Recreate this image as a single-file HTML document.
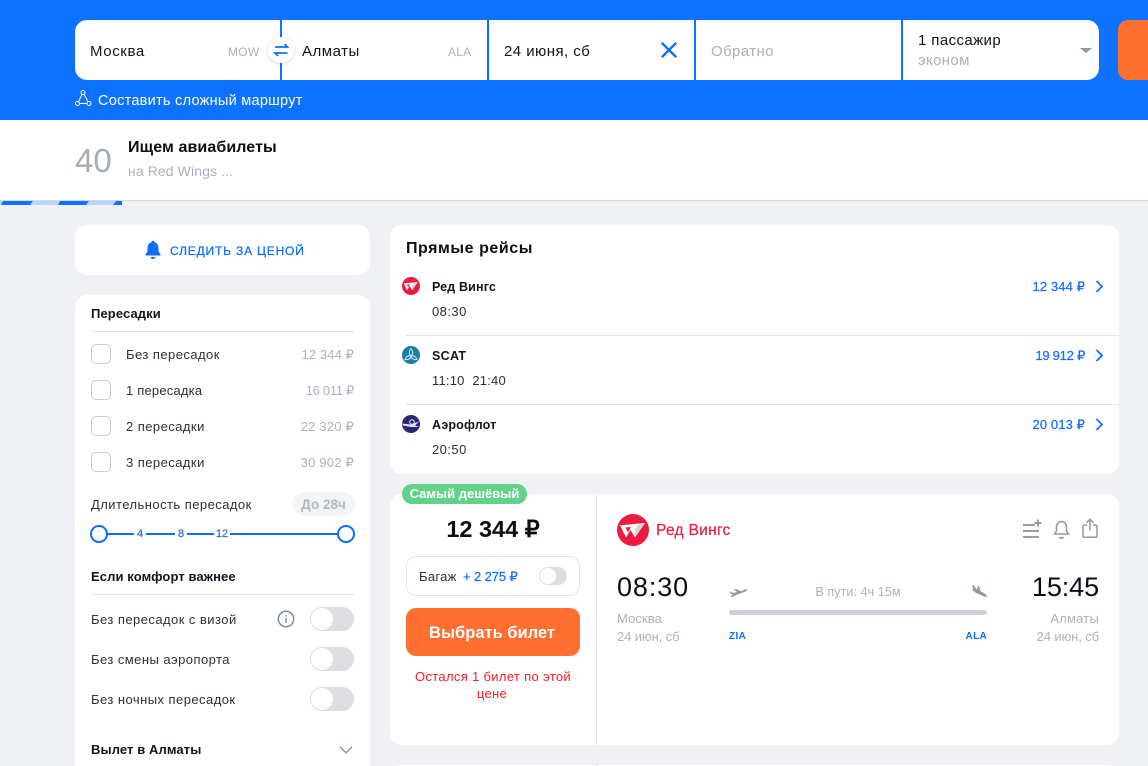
<!DOCTYPE html>
<html lang="ru"><head><meta charset="utf-8"><title>Авиабилеты</title>
<style>
html,body{margin:0;padding:0;width:1148px;height:766px;overflow:hidden}
body{font-family:"Liberation Sans",sans-serif;color:#10151c}
#w{position:relative;width:1148px;height:766px;overflow:hidden;background:#eff1f5}
.a{position:absolute}
.t{position:absolute;white-space:nowrap;line-height:18px;height:18px;margin-top:1px}
.r{text-align:right}
.c{text-align:center}
.card{position:absolute;background:#fff;border-radius:12px}
.cb{position:absolute;left:91px;width:18px;height:18px;border:1.5px solid #c9ccd0;border-radius:5px;background:#fff}
.tg{position:absolute;left:310px;width:44px;height:24px;border-radius:12px;background:#dcdee3}
.tg i{position:absolute;left:1px;top:1px;width:22px;height:22px;border-radius:50%;background:#fff}
.sm{font-size:13px;letter-spacing:.45px;color:#2b3038}
.gr{color:#a8b3bf}
.bl{color:#0d6efd}
.n{font-size:11px;color:#2f5df0;-webkit-text-stroke:.2px #2f5df0}
svg{position:absolute;overflow:visible}
</style></head><body><div id="w">

<div class="a" style="left:0;top:0;width:1148px;height:120px;background:#0d72ff"></div>
<div class="a" style="left:75px;top:20px;width:1024px;height:60px;background:#fff;border-radius:12px"></div>
<div class="a" style="left:280px;top:20px;width:2px;height:60px;background:#0d72ff"></div>
<div class="a" style="left:487px;top:20px;width:2px;height:60px;background:#0d72ff"></div>
<div class="a" style="left:694px;top:20px;width:2px;height:60px;background:#0d72ff"></div>
<div class="a" style="left:901px;top:20px;width:2px;height:60px;background:#0d72ff"></div>
<div class="a" style="left:1118px;top:20px;width:40px;height:60px;background:#ff6f2f;border-radius:10px 0 0 10px"></div>

<div class="t" style="left:90px;top:42px;font-size:15px;letter-spacing:.6px">Москва</div>
<div class="t gr" style="left:228px;top:42px;font-size:12px;letter-spacing:.3px">MOW</div>
<div class="a" style="left:268px;top:37px;width:26px;height:26px;border-radius:50%;background:#fff;box-shadow:0 1px 4px rgba(0,0,0,.16)"></div>
<svg style="left:268px;top:37px" width="26" height="26" viewBox="0 0 26 26" fill="none" stroke="#0d72ff" stroke-width="1.700"><path d="M7 10H19.500L16.500 7M19.500 16H7L10 19"/></svg>
<div class="t" style="left:302px;top:42px;font-size:15px;letter-spacing:.5px">Алматы</div>
<div class="t gr" style="left:448px;top:42px;font-size:12px;letter-spacing:.2px">ALA</div>
<div class="t" style="left:504px;top:42px;font-size:15px;letter-spacing:.45px">24 июня, сб</div>
<svg style="left:660px;top:41px" width="18" height="18" viewBox="0 0 18 18" fill="none" stroke="#0d6efd" stroke-width="2.400"><path d="M1.800 1.800 16.200 16.200M16.200 1.800 1.800 16.200"/></svg>
<div class="t" style="left:711px;top:42px;font-size:15px;letter-spacing:.4px;color:#a8b3bf">Обратно</div>
<div class="t" style="left:918px;top:31px;font-size:15px;letter-spacing:.4px">1 пассажир</div>
<div class="t gr" style="left:918px;top:51px;font-size:15px;letter-spacing:.35px">эконом</div>
<svg style="left:1080px;top:47px" width="12" height="8" viewBox="0 0 12 8"><path d="M0 1H12L6 6Z" fill="#8b99a8"/></svg>

<svg style="left:75px;top:90px" width="18" height="17" viewBox="0 0 18 17" fill="none" stroke="#fff" stroke-width="1"><circle cx="8" cy="2.500" r="2"/><circle cx="2.500" cy="13.500" r="2"/><circle cx="14" cy="13.500" r="2"/><path d="M7 4.300 3.500 11.700M9 4.300 13 11.700M4.500 13.500H12"/></svg>
<div class="t" style="left:98px;top:91px;font-size:14.500px;letter-spacing:.27px;color:#fff">Составить сложный маршрут</div>

<div class="a" style="left:0;top:120px;width:1148px;height:80px;background:#fff;border-bottom:1px solid #d4d8e0"></div>
<div class="t" style="left:75px;top:140px;font-size:33px;line-height:40px;height:40px;color:#a3aeb9">40</div>
<div class="t" style="left:128px;top:138px;font-size:16px;font-weight:bold;letter-spacing:.1px;color:#0b0f14">Ищем авиабилеты</div>
<div class="t gr" style="left:128px;top:161px;font-size:14px;letter-spacing:.1px">на Red Wings ...</div>
<svg style="left:0;top:201px" width="124" height="4" viewBox="0 0 124 4"><rect x="0" y="0" width="122" height="4" fill="#b9d6ff"/><path d="M3 0H33L30 4H1ZM60 0H89L86 4H58ZM116 0H122V4H113Z" fill="#0d72ff"/></svg>

<div class="card" style="left:75px;top:225px;width:295px;height:50px"></div>
<svg style="left:144px;top:240px" width="18" height="20" viewBox="0 0 18 20"><path d="M9 .800c.900 0 1.500.600 1.600 1.400C13.200 3 14.500 5.200 14.500 8v3.500l2 2.800v1.200H1.500v-1.200l2-2.800V8c0-2.800 1.300-5 3.900-5.800C7.500 1.400 8.100.800 9 .800ZM6.500 17h5c-.300 1.200-1.300 2-2.500 2s-2.200-.800-2.500-2Z" fill="#0d6efd"/></svg>
<div class="t" style="left:170px;top:241px;font-size:12px;letter-spacing:.82px;color:#0d6efd;-webkit-text-stroke:.25px #0d6efd">СЛЕДИТЬ ЗА ЦЕНОЙ</div>

<div class="card" style="left:75px;top:295px;width:295px;height:490px"></div>
<div class="t" style="left:91px;top:304px;font-size:13px;font-weight:bold;letter-spacing:.1px">Пересадки</div>
<div class="a" style="left:91px;top:331px;width:263px;height:1px;background:#e2e5ea"></div>
<div class="cb" style="top:344px"></div><div class="t sm" style="left:126px;top:345px">Без пересадок</div><div class="t r gr" style="right:794px;top:345px;font-size:13px;letter-spacing:.1px">12 344 ₽</div>
<div class="cb" style="top:380px"></div><div class="t sm" style="left:126px;top:381px;letter-spacing:.2px">1 пересадка</div><div class="t r gr" style="right:794px;top:381px;font-size:13px;letter-spacing:-.3px">16 011 ₽</div>
<div class="cb" style="top:416px"></div><div class="t sm" style="left:126px;top:417px">2 пересадки</div><div class="t r gr" style="right:794px;top:417px;font-size:13px;letter-spacing:.2px">22 320 ₽</div>
<div class="cb" style="top:452px"></div><div class="t sm" style="left:126px;top:453px">3 пересадки</div><div class="t r gr" style="right:794px;top:453px;font-size:13px;letter-spacing:.2px">30 902 ₽</div>

<div class="t sm" style="left:91px;top:495px">Длительность пересадок</div>
<div class="a" style="left:292px;top:492px;width:63px;height:24px;border-radius:12px;background:#f2f4f6"></div>
<div class="t c" style="left:292px;top:495px;width:63px;font-size:13.500px;font-weight:bold;color:#b0b9c3">До 28ч</div>
<div class="a" style="left:100px;top:533px;width:246px;height:2px;background:#0d6efd"></div>
<div class="a" style="left:134px;top:528px;width:12px;height:12px;background:#fff"></div>
<div class="t c n" style="left:134px;top:524px;width:12px">4</div>
<div class="a" style="left:175px;top:528px;width:12px;height:12px;background:#fff"></div>
<div class="t c n" style="left:175px;top:524px;width:12px">8</div>
<div class="a" style="left:214px;top:528px;width:16px;height:12px;background:#fff"></div>
<div class="t c n" style="left:214px;top:524px;width:16px">12</div>
<div class="a" style="left:90px;top:525px;width:14px;height:14px;border:2px solid #0d6efd;border-radius:50%;background:#fff"></div>
<div class="a" style="left:337px;top:525px;width:14px;height:14px;border:2px solid #0d6efd;border-radius:50%;background:#fff"></div>

<div class="t" style="left:91px;top:567px;font-size:13px;font-weight:bold;letter-spacing:.1px">Если комфорт важнее</div>
<div class="a" style="left:91px;top:594px;width:263px;height:1px;background:#e2e5ea"></div>
<div class="t sm" style="left:91px;top:610px">Без пересадок с визой</div>
<svg style="left:277px;top:610px" width="18" height="18" viewBox="0 0 18 18" fill="none" stroke="#7f8fa0" stroke-width="1.500"><circle cx="9" cy="9" r="7.700"/><path d="M9 8v5M9 5v1.500"/></svg>
<div class="tg" style="top:607px"><i></i></div>
<div class="t sm" style="left:91px;top:650px">Без смены аэропорта</div>
<div class="tg" style="top:647px"><i></i></div>
<div class="t sm" style="left:91px;top:690px">Без ночных пересадок</div>
<div class="tg" style="top:687px"><i></i></div>
<div class="t" style="left:91px;top:740px;font-size:13px;font-weight:bold;letter-spacing:.1px">Вылет в Алматы</div>
<svg style="left:339px;top:746px" width="14" height="9" viewBox="0 0 14 9" fill="none" stroke="#7f8b98" stroke-width="1.300"><path d="M1 .800 7 6.800 13 .800"/></svg>

<div class="card" style="left:390px;top:225px;width:729px;height:249px"></div>
<div class="t" style="left:406px;top:239px;font-size:16px;font-weight:bold;letter-spacing:.55px;color:#0b0f14">Прямые рейсы</div>
<div class="a" style="left:406px;top:335px;width:713px;height:1px;background:#e2e5ea"></div>
<div class="a" style="left:406px;top:404px;width:713px;height:1px;background:#e2e5ea"></div>

<svg style="left:402px;top:277px" width="18" height="18" viewBox="0 0 32 32"><circle cx="16" cy="16" r="16" fill="#ee1c3c"/><path d="M3 11.300 28 9 18 23.500 13.500 16 9 23.500Z" fill="#fff"/><path d="M8.500 13.500 11 18.500 14 13Z" fill="#ee1c3c"/><path d="M22 9.600 28 9 18.800 22.300 17.500 16Z" fill="#d3d5d9"/></svg>
<div class="t" style="left:432px;top:277px;font-size:12.500px;font-weight:bold;letter-spacing:.15px;color:#11161c">Ред Вингс</div>
<div class="t sm" style="left:432px;top:302px">08:30</div>
<div class="t r" style="right:63px;top:277px;font-size:13px;letter-spacing:.1px;color:#0d6efd;-webkit-text-stroke:.2px #0d6efd">12 344 ₽</div>
<svg style="left:1095px;top:280px" width="9" height="13" viewBox="0 0 9 13" fill="none" stroke="#0d6efd" stroke-width="1.700"><path d="M1.500 1 7 6.500 1.500 12"/></svg>

<svg style="left:402px;top:346px" width="18" height="18" viewBox="0 0 18 18"><circle cx="9" cy="9" r="9" fill="#1a7ea6"/><path d="M9 2.500C11 5 11.500 8 9 10 6.500 8 7 5 9 2.500ZM15 13.500C12 14 9.500 13 9 10 12 9 14 11 15 13.500ZM3 13.500C4 11 6 9 9 10 8.500 13 6 14 3 13.500Z" fill="none" stroke="#d5ebf3" stroke-width="1"/></svg>
<div class="t" style="left:432px;top:346px;font-size:12.500px;font-weight:bold;letter-spacing:.3px;color:#11161c">SCAT</div>
<div class="t sm" style="left:432px;top:371px;word-spacing:4px;letter-spacing:.2px">11:10 21:40</div>
<div class="t r" style="right:63px;top:346px;font-size:13px;letter-spacing:-.25px;color:#0d6efd;-webkit-text-stroke:.2px #0d6efd">19 912 ₽</div>
<svg style="left:1095px;top:349px" width="9" height="13" viewBox="0 0 9 13" fill="none" stroke="#0d6efd" stroke-width="1.700"><path d="M1.500 1 7 6.500 1.500 12"/></svg>

<svg style="left:402px;top:415px" width="18" height="18" viewBox="0 0 18 18"><circle cx="9" cy="9" r="9" fill="#2a2870"/><path d="M0 8.500 9 9.500 17 6.500 13 10.500 17 12 9 12 1 10.500Z" fill="#dfe0ee"/><circle cx="10" cy="7" r="2.300" fill="none" stroke="#dfe0ee"/></svg>
<div class="t" style="left:432px;top:415px;font-size:12.500px;font-weight:bold;letter-spacing:.15px;color:#11161c">Аэрофлот</div>
<div class="t sm" style="left:432px;top:440px">20:50</div>
<div class="t r" style="right:63px;top:415px;font-size:13px;letter-spacing:.1px;color:#0d6efd;-webkit-text-stroke:.2px #0d6efd">20 013 ₽</div>
<svg style="left:1095px;top:418px" width="9" height="13" viewBox="0 0 9 13" fill="none" stroke="#0d6efd" stroke-width="1.700"><path d="M1.500 1 7 6.500 1.500 12"/></svg>

<div class="card" style="left:390px;top:494px;width:729px;height:251px"></div>
<div class="a" style="left:596px;top:494px;width:1px;height:251px;background:#e2e5ea"></div>
<div class="card" style="left:390px;top:765px;width:729px;height:20px"></div>
<div class="a" style="left:596px;top:765px;width:1px;height:1px;background:#e2e5ea"></div>

<div class="a" style="left:402px;top:484px;width:125px;height:20px;border-radius:10px;background:#62d18a"></div>
<div class="t c" style="left:402px;top:484px;width:125px;font-size:13px;font-weight:bold;color:#fff">Самый дешёвый</div>
<div class="t c" style="left:390px;top:515px;width:206px;line-height:26px;height:26px;font-size:23.500px;font-weight:bold;color:#0b0f14">12 344 ₽</div>

<div class="a" style="left:406px;top:556px;width:172px;height:38px;border:1px solid #e4e6ea;border-radius:10px;background:#fff"></div>
<div class="t" style="left:419px;top:567px;font-size:13px;letter-spacing:.3px;color:#2b3038">Багаж</div>
<div class="t" style="left:463px;top:567px;font-size:13px;letter-spacing:-.1px;color:#0d6efd;-webkit-text-stroke:.2px #0d6efd">+ 2 275 ₽</div>
<div class="a" style="left:539px;top:567px;width:28px;height:18px;border-radius:9px;background:#dcdee3"><i class="a" style="left:1px;top:1px;width:16px;height:16px;border-radius:50%;background:#fff"></i></div>

<div class="a" style="left:406px;top:608px;width:174px;height:48px;border-radius:10px;background:#ff6f2f"></div>
<div class="t c" style="left:405px;top:623px;width:174px;font-size:16.500px;font-weight:bold;color:#fff">Выбрать билет</div>
<div class="t c" style="left:407px;top:667px;width:172px;font-size:13px;letter-spacing:.33px;color:#ff1a24">Остался 1 билет по этой</div>
<div class="t c" style="left:406px;top:684px;width:172px;font-size:13px;letter-spacing:.33px;color:#ff1a24">цене</div>

<svg style="left:617px;top:514px" width="32" height="32" viewBox="0 0 32 32"><circle cx="16" cy="16" r="16" fill="#ee1c3c"/><path d="M3 11.300 28 9 18 23.500 13.500 16 9 23.500Z" fill="#fff"/><path d="M8.500 13.500 11 18.500 14 13Z" fill="#ee1c3c"/><path d="M22 9.600 28 9 18.800 22.300 17.500 16Z" fill="#d3d5d9"/></svg>
<div class="t" style="left:656px;top:521px;font-size:15.500px;letter-spacing:.3px;color:#ee1c3c;-webkit-text-stroke:.2px #ee1c3c">Ред Вингс</div>

<svg style="left:1023px;top:519px" width="20" height="20" viewBox="0 0 20 20" fill="none" stroke="#8b8f94" stroke-width="1.700"><path d="M0 6H12M0 12H16M0 18H16M11.500 4H18.500M15 .500V7.500"/></svg>
<svg style="left:1053px;top:520px" width="17" height="20" viewBox="0 0 17 20" fill="none" stroke="#8f9aa6" stroke-width="1.500"><path d="M8.500 1.500c3.200 0 5 2.500 5 5.500v4l2 3H1.500l2-3V7c0-3 1.800-5.500 5-5.500Z"/><path d="M6.500 17c.400 1.300 3.600 1.300 4 0" stroke-width="1.800"/></svg>
<svg style="left:1082px;top:518px" width="16" height="20" viewBox="0 0 16 20" fill="none" stroke="#8f9aa6" stroke-width="1.500"><path d="M8 12.500V1.200M4.500 4.700 8 1.200 11.500 4.700M5 7H2.500A1.500 1.500 0 0 0 1 8.500V18a1.500 1.500 0 0 0 1.500 1.300h11A1.500 1.500 0 0 0 15 18V8.500A1.500 1.500 0 0 0 13.500 7H11"/></svg>

<div class="t" style="left:617px;top:570px;line-height:32px;height:32px;font-size:27px;letter-spacing:.9px;color:#0b0f14">08:30</div>
<div class="t gr" style="left:617px;top:609px;font-size:13px;letter-spacing:.1px">Москва</div>
<div class="t gr" style="left:617px;top:627px;font-size:13px;letter-spacing:-.1px">24 июн, сб</div>

<svg style="left:729px;top:588px" width="19" height="10" viewBox="0 0 19 10"><path d="M0 4 2 3.600 4 5 8 4 5 1.500 7 1 12 3.200 16 1.500C17.500 1 18.500 1.500 18 2.300 17.700 2.800 17 3.300 16 3.700L7 7 3 9.300 1.500 9 3.500 6.500Z" fill="#8f9aa6"/></svg>
<div class="t c" style="left:748px;top:582px;width:220px;font-size:12.500px;letter-spacing:.1px;color:#a8b3bf">В пути: 4ч 15м</div>
<svg style="left:971px;top:585px" width="16" height="13" viewBox="0 0 18 15"><path d="M1.500 .500 3 0 5.500 4 7 5 7.500 1 9 1.500 11 7.500 15 9.500c1.500.800 3 2 3 3.500 0 1-1 1-2.500.500L5.500 9 2 6.500Z" fill="#8f9aa6"/></svg>
<div class="a" style="left:729px;top:610px;width:258px;height:5px;border-radius:3px;background:#ccd2da"></div>
<div class="t" style="left:729px;top:627px;font-size:10px;font-weight:bold;letter-spacing:.4px;color:#0d6efd">ZIA</div>
<div class="t r" style="right:161px;top:627px;font-size:10px;font-weight:bold;letter-spacing:.3px;color:#0d6efd">ALA</div>

<div class="t r" style="right:49px;top:570px;line-height:32px;height:32px;font-size:27px;letter-spacing:-.1px;color:#0b0f14">15:45</div>
<div class="t r gr" style="right:49px;top:609px;font-size:13px;letter-spacing:.2px">Алматы</div>
<div class="t r gr" style="right:49px;top:627px;font-size:13px;letter-spacing:-.1px">24 июн, сб</div>

</div></body></html>
